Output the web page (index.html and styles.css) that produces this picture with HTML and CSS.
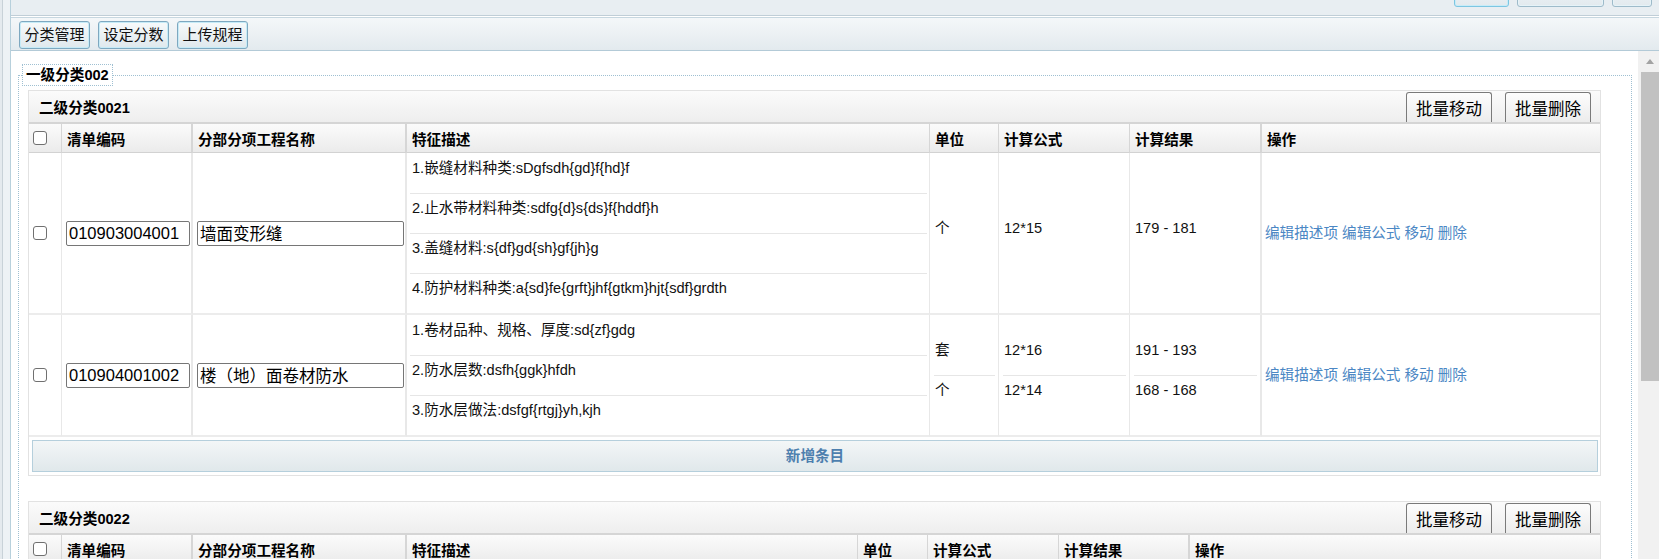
FILE: index.html
```html
<!DOCTYPE html>
<html lang="zh-CN">
<head>
<meta charset="utf-8">
<title>分类管理</title>
<link rel="stylesheet" href="styles.css">
</head>
<body>
<div class="app">
  <div class="side"></div>
  <div class="main">
    <div class="topbar">
      <span class="top-btn active"></span>
      <span class="top-btn wide"></span>
      <span class="top-btn small"></span>
    </div>
    <div class="toolbar">
      <button class="tab">分类管理</button>
      <button class="tab">设定分数</button>
      <button class="tab">上传规程</button>
    </div>
    <div class="workspace">
      <div class="content">
        <fieldset class="group">
          <legend>一级分类002</legend>

          <div class="section">
            <div class="sec-head">
              <span class="sec-title">二级分类0021</span>
              <button class="btn">批量移动</button>
              <button class="btn">批量删除</button>
            </div>
            <table class="grid">
              <colgroup>
                <col class="w-check"><col class="w-code"><col class="w-name"><col class="w-desc1">
                <col class="w-unit1"><col class="w-formula"><col class="w-result"><col class="w-ops1">
              </colgroup>
              <thead>
                <tr>
                  <th class="c-check"><input type="checkbox"></th>
                  <th class="bd2">清单编码</th>
                  <th class="bd2">分部分项工程名称</th>
                  <th>特征描述</th>
                  <th>单位</th>
                  <th>计算公式</th>
                  <th class="bd2">计算结果</th>
                  <th>操作</th>
                </tr>
              </thead>
              <tbody>
                <tr>
                  <td class="c-check"><input type="checkbox"></td>
                  <td class="c-field bd2"><input class="field code" type="text" value="010903004001"></td>
                  <td class="c-field bd2"><input class="field name" type="text" value="墙面变形缝"></td>
                  <td class="c-desc">
                    <div class="sub">1.嵌缝材料种类:sDgfsdh{gd}f{hd}f</div>
                    <div class="sub">2.止水带材料种类:sdfg{d}s{ds}f{hddf}h</div>
                    <div class="sub">3.盖缝材料:s{df}gd{sh}gf{jh}g</div>
                    <div class="sub">4.防护材料种类:a{sd}fe{grft}jhf{gtkm}hjt{sdf}grdth</div>
                  </td>
                  <td class="c-val"><div class="sub">个</div></td>
                  <td class="c-val"><div class="sub">12*15</div></td>
                  <td class="c-val bd2"><div class="sub">179 - 181</div></td>
                  <td class="c-ops"><a href="#">编辑描述项</a> <a href="#">编辑公式</a> <a href="#">移动</a> <a href="#">删除</a></td>
                </tr>
                <tr>
                  <td class="c-check"><input type="checkbox"></td>
                  <td class="c-field bd2"><input class="field code" type="text" value="010904001002"></td>
                  <td class="c-field bd2"><input class="field name" type="text" value="楼（地）面卷材防水"></td>
                  <td class="c-desc">
                    <div class="sub">1.卷材品种、规格、厚度:sd{zf}gdg</div>
                    <div class="sub">2.防水层数:dsfh{ggk}hfdh</div>
                    <div class="sub">3.防水层做法:dsfgf{rtgj}yh,kjh</div>
                  </td>
                  <td class="c-val"><div class="sub">套</div><div class="sub">个</div></td>
                  <td class="c-val"><div class="sub">12*16</div><div class="sub">12*14</div></td>
                  <td class="c-val bd2"><div class="sub">191 - 193</div><div class="sub">168 - 168</div></td>
                  <td class="c-ops"><a href="#">编辑描述项</a> <a href="#">编辑公式</a> <a href="#">移动</a> <a href="#">删除</a></td>
                </tr>
              </tbody>
            </table>
            <div class="add-bar">新增条目</div>
          </div>

          <div class="section">
            <div class="sec-head">
              <span class="sec-title">二级分类0022</span>
              <button class="btn">批量移动</button>
              <button class="btn">批量删除</button>
            </div>
            <table class="grid">
              <colgroup>
                <col class="w-check"><col class="w-code"><col class="w-name"><col class="w-desc2">
                <col class="w-unit2"><col class="w-formula"><col class="w-result2"><col class="w-ops2">
              </colgroup>
              <thead>
                <tr>
                  <th class="c-check"><input type="checkbox"></th>
                  <th class="bd2">清单编码</th>
                  <th class="bd2">分部分项工程名称</th>
                  <th>特征描述</th>
                  <th>单位</th>
                  <th>计算公式</th>
                  <th class="bd2">计算结果</th>
                  <th>操作</th>
                </tr>
              </thead>
            </table>
          </div>
        </fieldset>
      </div>
      <div class="vscroll">
        <div class="up"></div>
        <div class="thumb"></div>
      </div>
    </div>
  </div>
</div>
</body>
</html>
```
FILE: styles.css
```css
* { box-sizing: border-box; }
html, body { margin: 0; height: 100%; }
body {
  font-family: "Liberation Sans", "Noto Sans CJK SC", sans-serif;
  font-size: 14.6px;
  color: #111;
  background: #fff;
  overflow: hidden;
}
.app { display: flex; height: 559px; }
.side {
  width: 11px; flex: none;
  background: linear-gradient(to right, #e4eaee 0 2px, #c8d2d8 2px 3px, #edf2f5 3px 10px, #b7d0dc 10px 11px);
}
.main { flex: 1; display: flex; flex-direction: column; min-width: 0; }

.topbar {
  height: 16px; flex: none;
  background: #e8eef2;
  border-bottom: 1px solid #c0ced7;
  display: flex; justify-content: flex-end; gap: 8px;
  padding-right: 7px;
  overflow: hidden;
}
.top-btn {
  display: block; height: 28px; margin-top: -21px;
  border: 1px solid #9ebbca; border-radius: 3px;
  box-shadow: inset 0 0 0 1px #e6f3f8;
  background: linear-gradient(#f3f7f9, #e2eaee);
}
.top-btn.active { width: 55px; border-color: #7cc6e2; box-shadow: inset 0 0 0 1px #c8ecf8; }
.top-btn.wide { width: 87px; }
.top-btn.small { width: 40px; }

.toolbar {
  flex: none; margin-top: 1px;
  border-top: 1px solid #c7d7e0; border-bottom: 1px solid #b3cad7;
  background: linear-gradient(#f4f7f9, #e3eaee);
  padding: 3px 8px 1px;
  display: flex; gap: 8px;
}
.tab {
  height: 28px; padding: 0 4.5px; margin: 0;
  font-family: inherit; font-size: 15px; line-height: 26px; color: #111;
  border: 1px solid #7ea8c0; border-radius: 3px;
  box-shadow: inset 0 0 0 1px #c6ebf7;
  background: linear-gradient(#f7fafb, #dfe8ed);
}

.workspace { flex: 1; display: flex; min-height: 0; }
.content { flex: 1; min-width: 0; overflow: hidden; padding: 13px 6px 0 7px; }
.vscroll { width: 21px; flex: none; background: #f1f1f1; display: flex; flex-direction: column; }
.vscroll .up { height: 21px; display: flex; align-items: center; justify-content: center; padding-left: 2px; }
.vscroll .up::before {
  content: ""; width: 0; height: 0;
  border-left: 4.5px solid transparent; border-right: 4.5px solid transparent;
  border-bottom: 5px solid #a3a3a3;
}
.vscroll .thumb { height: 309px; margin-left: 3px; background: #c1c1c1; }

.group {
  margin: 0; min-width: 0;
  padding: 4px 30px 0 9px;
  border: 1px dotted #9fc0d2;
}
.group legend {
  margin-left: -6px; padding: 0 3px;
  border: 1px dotted #9fc0d2;
  font-weight: bold; line-height: 20px; color: #000;
}

.section { border: 1px solid #e2e2e2; background: #fff; }
.section + .section { margin-top: 25px; }
.sec-head {
  height: 33px; display: flex; align-items: flex-end;
  padding: 0 9px 0 10px;
  background: linear-gradient(#fbfbfb, #eeeeee);
  border-bottom: 2px solid #d5d5d5;
}
.sec-title { align-self: center; font-weight: bold; margin-right: auto; color: #000; }
.btn {
  height: 30px; padding: 0 9px; margin: 0;
  font-family: inherit; font-size: 16.5px; color: #000;
  border: 1px solid #7a7a7a; border-bottom: 0; border-radius: 3px 3px 0 0;
  background: linear-gradient(#fdfdfd, #ececec);
}
.btn + .btn { margin-left: 13px; }

.grid { width: 100%; table-layout: fixed; border-collapse: separate; border-spacing: 0; }
.w-check { width: 33px; }
.w-code { width: 131px; }
.w-name { width: 214px; }
.w-desc1 { width: 523px; }
.w-unit1 { width: 69px; }
.w-formula { width: 131px; }
.w-result { width: 132px; }
.w-ops1 { width: 338px; }
.w-desc2 { width: 451px; }
.w-unit2 { width: 70px; }
.w-result2 { width: 131px; }
.w-ops2 { width: 410px; }

.grid th {
  height: 29px; padding: 0 5px;
  text-align: left; font-weight: bold; color: #000; white-space: nowrap;
  background: linear-gradient(#fbfbfb, #ebebeb);
  border-right: 1px solid #d6d6d6; border-bottom: 1px solid #d2d2d2;
}
.grid td {
  padding: 0; vertical-align: middle;
  border-right: 1px solid #e8e8e8; border-bottom: 2px solid #ececec;
}
.grid th:last-child, .grid td:last-child { border-right: 0; }
.grid .bd2 { border-right-width: 2px; }
.grid th.c-check, .grid td.c-check { padding: 0; }
.c-check input {
  -webkit-appearance: none; appearance: none;
  display: block; width: 14px; height: 14px; margin: 3px 3px 3px 4px;
  border: 1px solid #707070; border-radius: 3px; background: #fff;
}

.c-field { padding-left: 4px !important; }
.field {
  display: block; height: 25px; padding: 0 2px; margin: 0;
  font-family: inherit; font-size: 16.5px; color: #000;
  border: 1px solid #767676; border-radius: 2px; background: #fff;
}
.field.code { width: 124px; }
.field.name { width: 207px; }

.sub { padding: 6px 0 16px 2px; line-height: 18px; white-space: nowrap; }
.sub + .sub { border-top: 1px solid #e6e6e6; padding-top: 5px; }
.c-desc .sub { margin: 0 2px 0 3px; }
.c-val .sub { margin: 0 3px 0 4px; padding-left: 1px; }

.c-ops { padding: 0 3px !important; line-height: 18px; }
.c-ops a { color: #4b87c4; text-decoration: none; }

.add-bar {
  margin: 3px 2px 3px 3px; height: 32px;
  border: 1px solid #b5cfdc;
  background: linear-gradient(#f3f6f7, #e0e8eb);
  text-align: center; line-height: 30px;
  font-weight: bold; color: #4d7fae;
}
```
